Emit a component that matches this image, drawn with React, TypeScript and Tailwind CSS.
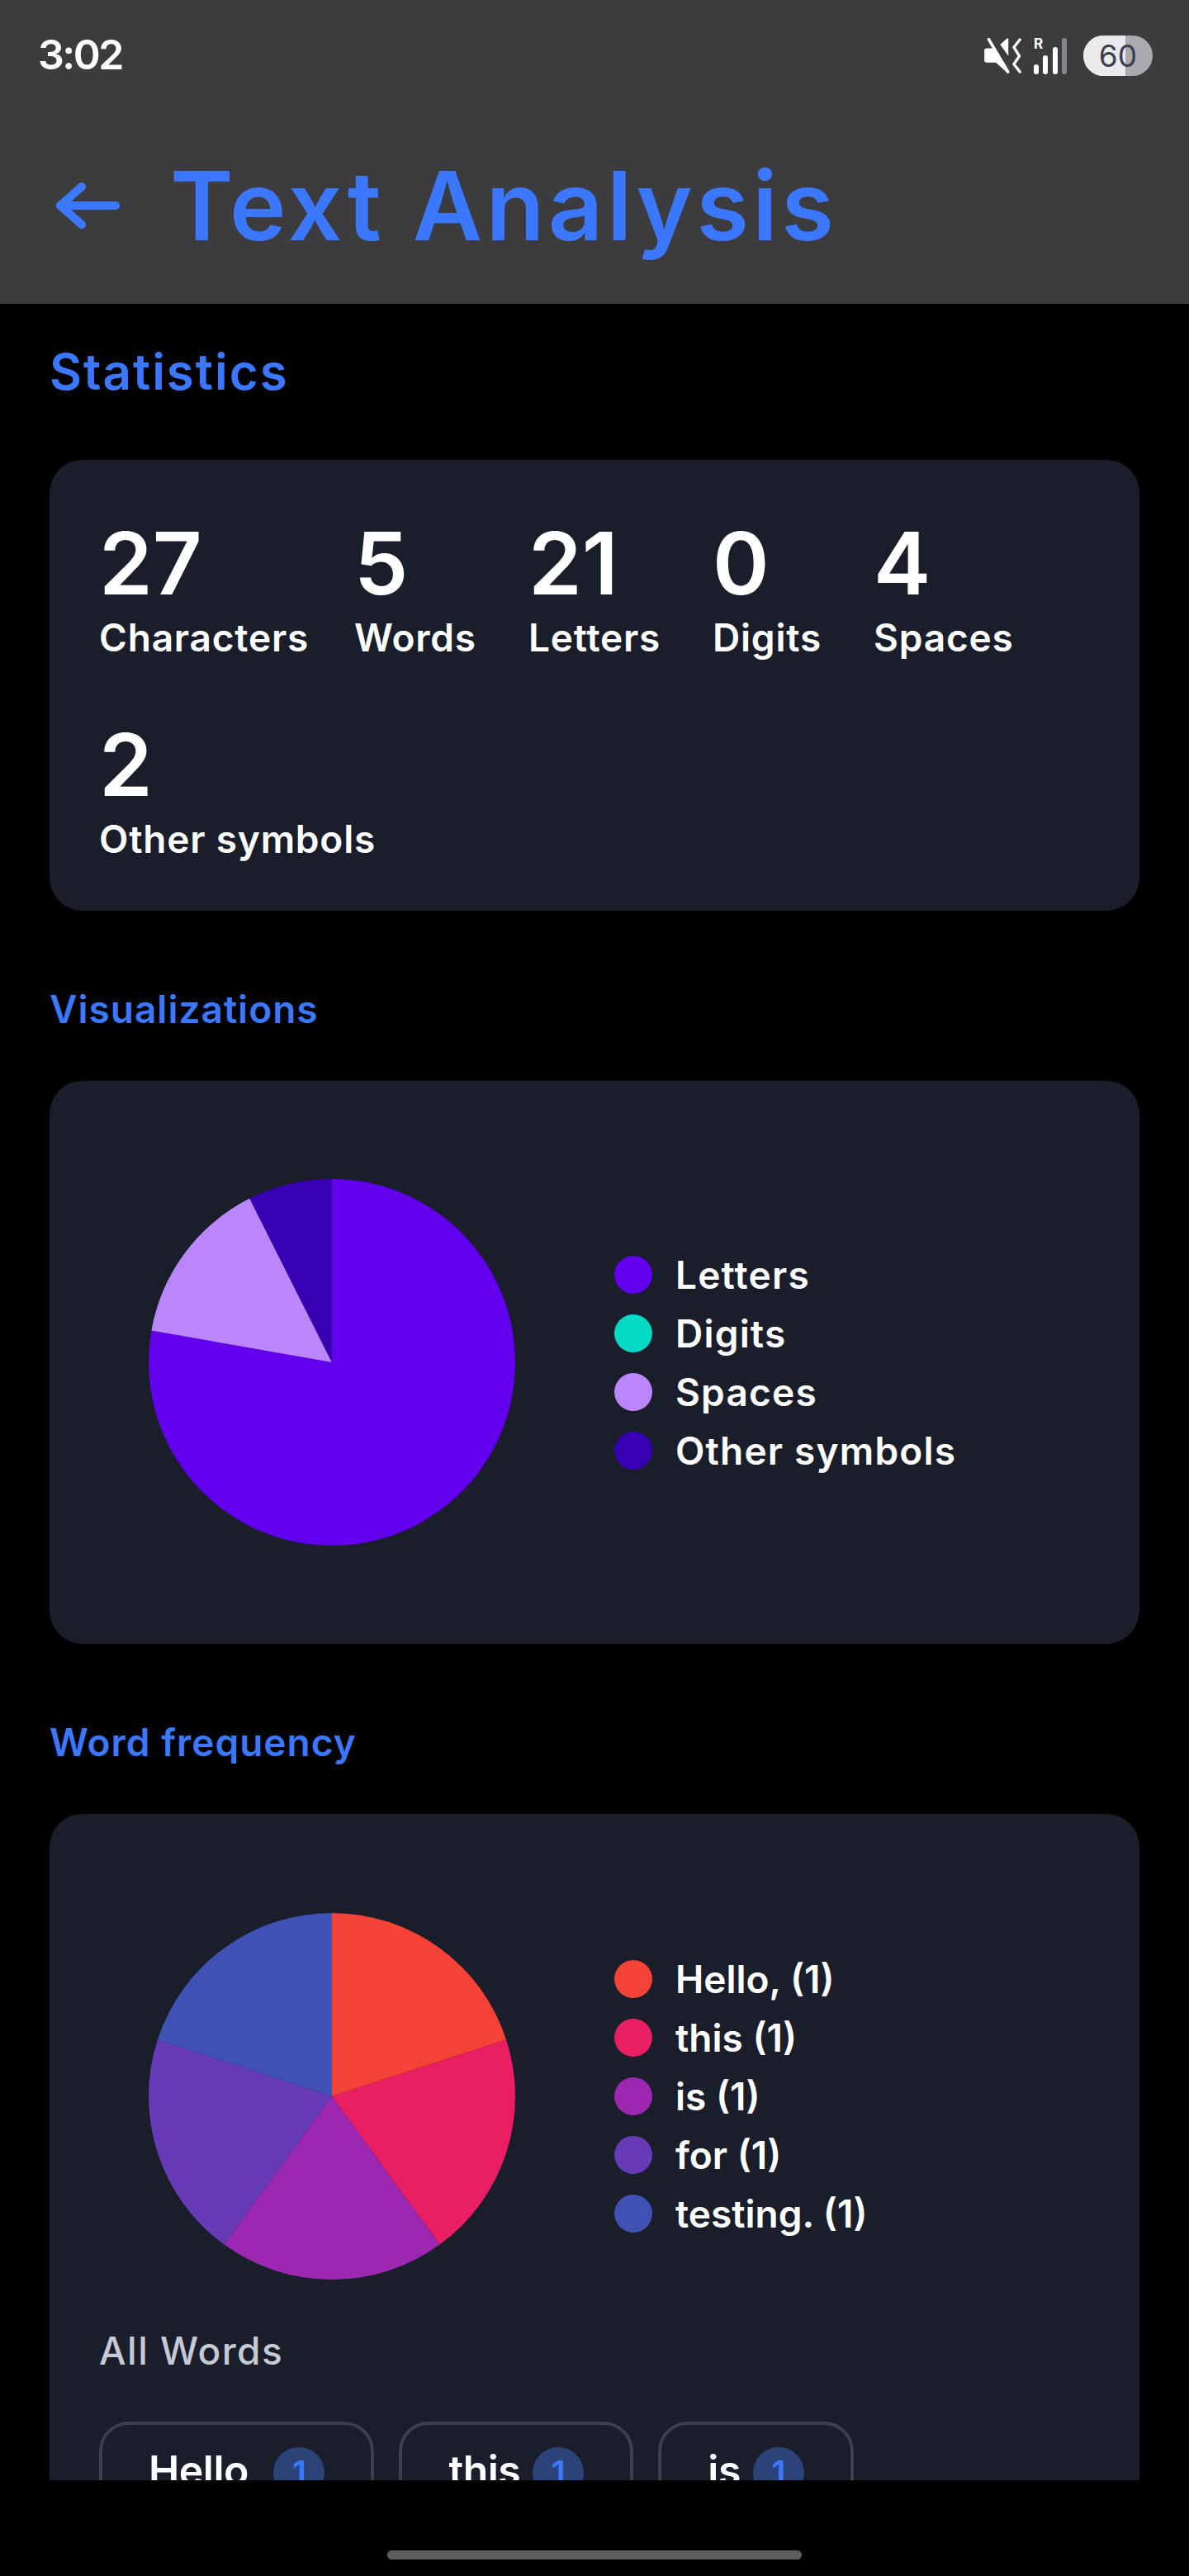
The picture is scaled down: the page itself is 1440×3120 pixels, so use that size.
const FONT = "font-['Inter','Liberation_Sans',sans-serif]";

// angles go clockwise from 12 o'clock
function Pie({ slices }: { slices: { value: number; color: string }[] }) {
  const total = slices.reduce((s, x) => s + x.value, 0);
  let acc = 0;
  const pt = (f: number) => {
    const a = f * Math.PI * 2;
    return `${100 + 100 * Math.sin(a)} ${100 - 100 * Math.cos(a)}`;
  };
  return (
    <svg viewBox="0 0 200 200" className="w-[444px] h-[444px] shrink-0">
      {slices.filter((s) => s.value > 0).map((s, i) => {
        const from = acc / total;
        acc += s.value;
        const to = acc / total;
        const large = to - from > 0.5 ? 1 : 0;
        return <path key={i} d={`M100 100 L${pt(from)} A100 100 0 ${large} 1 ${pt(to)} Z`} fill={s.color} />;
      })}
    </svg>
  );
}

function Legend({ items, tracking }: { items: { label: string; color: string }[]; tracking: string }) {
  return (
    <div className="flex flex-col gap-[25px] ml-[120px]">
      {items.map((it) => (
        <div key={it.label} className="flex items-center h-[46px]">
          <span className="w-[46px] h-[46px] rounded-full mr-[28px]" style={{ backgroundColor: it.color }} />
          <span className={`text-white text-[46px] leading-[46px] font-semibold ${tracking}`}>{it.label}</span>
        </div>
      ))}
    </div>
  );
}

function Stat({ value, label, width }: { value: string; label: string; width: string }) {
  return (
    <div className={`flex flex-col ${width}`}>
      <span className="text-white text-[104px] leading-[104px] font-semibold">{value}</span>
      <span className="text-white text-[46px] leading-[58px] font-semibold tracking-[0.8px] mt-[9px] whitespace-nowrap">{label}</span>
    </div>
  );
}

function Heading({ children }: { children: string }) {
  return <div className="text-[#3b78ff] font-semibold text-[46px] tracking-[1px]">{children}</div>;
}

function Chip({ word }: { word: string }) {
  return (
    <div className="h-[120px] rounded-[36px] border-[4px] border-[#3d3f4b] px-[56px] pt-[25px] flex gap-[15px] items-start">
      <span className="text-white text-[50px] leading-[60px] font-semibold tracking-[-0.5px]">{word}</span>
      <span className="mt-[2px] w-[62px] h-[62px] rounded-full bg-[#2b4379] text-[#3b78ff] text-[40px] leading-[62px] text-center font-semibold">1</span>
    </div>
  );
}

const CHARS = [
  { label: 'Letters', value: 21, color: '#6200ee' },
  { label: 'Digits', value: 0, color: '#03dac6' },
  { label: 'Spaces', value: 4, color: '#bb86fc' },
  { label: 'Other symbols', value: 2, color: '#3700b3' },
];

const WORDS = [
  { label: 'Hello, (1)', value: 1, color: '#f44336' },
  { label: 'this (1)', value: 1, color: '#e91e63' },
  { label: 'is (1)', value: 1, color: '#9c27b0' },
  { label: 'for (1)', value: 1, color: '#673ab7' },
  { label: 'testing. (1)', value: 1, color: '#3f51b5' },
];

export default function App() {
  return (
    <div className={`${FONT} relative w-[1440px] h-[3120px] bg-black overflow-hidden flex flex-col`}>
      <header className="h-[368px] bg-[#3c3c3f] shrink-0 flex flex-col">
        <div className="flex justify-between items-center pl-[46px] pr-[44px] pt-[38px]">
          <span className="text-white text-[50px] leading-[56px] font-semibold tracking-[-2.5px]">3:02</span>
          <div className="flex items-center mt-[3px]">
            <svg viewBox="0 0 135 130" className="w-[45px] h-[43px] text-white" fill="currentColor">
              <path d="M0 46 Q0 38 8 38 H30 L88 104 V122 Q88 130 80 124 L42 90 H8 Q0 90 0 82 Z" />
              <path d="M58 24 L82 2 Q88 -2 88 6 V66 Z" />
              <path d="M16 5 L86 124" fill="none" stroke="#3c3c3f" strokeWidth="6" transform="translate(7 -4)" />
              <path d="M16 5 L86 124" fill="none" stroke="currentColor" strokeWidth="11" strokeLinecap="round" />
              <path d="M130 6 L108 34 L128 66 L108 96 L130 124" fill="none" stroke="currentColor" strokeWidth="10" strokeLinecap="round" strokeLinejoin="round" />
            </svg>
            <svg viewBox="0 0 40 44" className="w-[40px] h-[44px] ml-[15px] text-white" fill="currentColor">
              <text x="0" y="13" fontSize="17" fontWeight="700">R</text>
              <rect x="0" y="32" width="6" height="12" rx="3" />
              <rect x="11" y="21" width="6" height="23" rx="3" />
              <rect x="23" y="11" width="6" height="33" rx="3" />
              <rect x="34" y="0" width="6" height="44" rx="3" fill="#85858a" />
            </svg>
            <div className="relative ml-[20px] w-[84px] h-[49px] rounded-full overflow-hidden bg-[#aaaaae] flex items-center justify-center">
              <div className="absolute left-0 top-0 bottom-0 w-[51px] bg-[#ebebed]" />
              <span className="relative text-[#3c3f52] text-[37px] leading-none">60</span>
            </div>
          </div>
        </div>
        <div className="flex items-center pl-[67px] mt-[85px]">
          <svg viewBox="0 0 78 56" className="w-[78px] h-[56px] text-[#3b78ff]" fill="none" stroke="currentColor" strokeWidth="10" strokeLinecap="round" strokeLinejoin="round">
            <path d="M73 28 H6 M32 5 L6 28 L32 51" />
          </svg>
          <h1 className="text-[#3b78ff] text-[116px] leading-[140px] font-semibold tracking-[4.4px] ml-[61px]">Text Analysis</h1>
        </div>
      </header>

      <main className="h-[2636px] overflow-hidden px-[60px] shrink-0">
        <div className="pt-[42px] h-[189px] text-[#3b78ff] font-semibold text-[60px] leading-[80px] tracking-[2px]">Statistics</div>

        <section className="h-[546px] bg-[#1a1e2b] rounded-[40px] px-[60px] pt-[73px]">
          <div className="flex">
            <Stat value="27" label="Characters" width="w-[309px]" />
            <Stat value="5" label="Words" width="w-[211px]" />
            <Stat value="21" label="Letters" width="w-[223px]" />
            <Stat value="0" label="Digits" width="w-[195px]" />
            <Stat value="4" label="Spaces" width="w-[200px]" />
          </div>
          <div className="mt-[73px]"><Stat value="2" label="Other symbols" width="w-[400px]" /></div>
        </section>

        <div className="h-[206px] flex items-center pt-[32px]"><Heading>Visualizations</Heading></div>

        <section className="h-[682px] bg-[#1a1e2b] rounded-[40px] pl-[120px] flex items-center">
          <Pie slices={CHARS} />
          <Legend items={CHARS} tracking="tracking-[1.2px]" />
        </section>

        <div className="h-[206px] flex items-center pt-[32px]"><Heading>Word frequency</Heading></div>

        <section className="h-[900px] bg-[#1a1e2b] rounded-t-[40px] px-[60px] pt-[120px]">
          <div className="flex items-center pl-[60px]">
            <Pie slices={WORDS} />
            <Legend items={WORDS} tracking="tracking-[0px]" />
          </div>
          <div className="mt-[56px] text-[#c6c9d6] text-[46px] leading-[60px] font-medium tracking-[1.5px]">All Words</div>
          <div className="flex gap-[30px] mt-[56px]">
            <Chip word="Hello," />
            <Chip word="this" />
            <Chip word="is" />
          </div>
        </section>
      </main>

      <div className="flex-1 flex justify-center pt-[85px]">
        <div className="w-[502px] h-[11px] rounded-full bg-[#5e5e60]" />
      </div>
    </div>
  );
}
